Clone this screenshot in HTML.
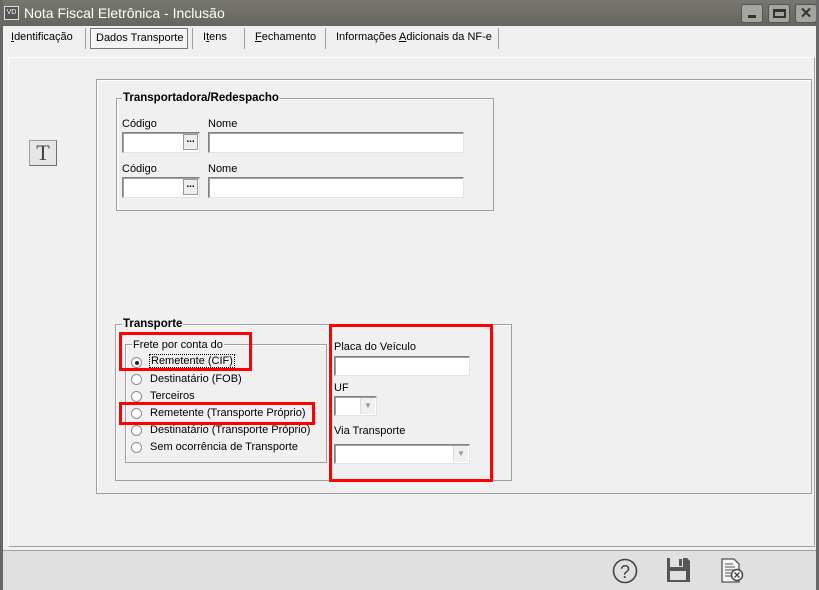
<!DOCTYPE html>
<html><head><meta charset="utf-8"><style>
*{margin:0;padding:0;box-sizing:border-box}
body{width:819px;height:590px;overflow:hidden;background:#f0f0f0;font-family:"Liberation Sans",sans-serif;font-size:11px;color:#000;position:relative}
.a{position:absolute}
.title{left:0;top:0;width:819px;height:26px;background:linear-gradient(#77776f,#66665f);color:#fff;font-size:14px}
.wb{top:4px;width:22px;height:19px;background:#a4a4a0;border:1px solid #555;border-radius:3px}
.lb{position:absolute;left:0;top:0;width:3px;height:590px;background:#676767}
.rb{position:absolute;right:0;top:0;width:3px;height:590px;background:#676767}
.tab{top:31px;font-size:11px}
.sep{top:28px;width:1px;height:21px;background:#a0a0a0}
.grp{border:1px solid #a0a0a0;box-shadow:1px 1px 0 #fff inset}
.gl{background:#f0f0f0;font-weight:bold;padding:0 1px}
.inp{background:#fff;border:1px solid #828282;border-right-color:#e3e3e3;border-bottom-color:#e3e3e3;box-shadow:1px 1px 0 #a0a0a0 inset}
.red{border:3px solid #f00}
.rad{width:11px;height:11px;border-radius:50%;border:1px solid #8d8d8d;background:#fff;left:131px}
.rt{left:150px}
</style></head><body>
<div class="a title"><div class="a" style="left:4px;top:6px;width:15px;height:14px;border:1px solid #ddd;font-size:7px;line-height:12px;text-align:center;background:#555">VD</div><div class="a" style="left:24px;top:5px;font-size:14px">Nota Fiscal Eletrônica - Inclusão</div>
<div class="a wb" style="left:741px"><div class="a" style="left:6px;top:10px;width:8px;height:3px;background:#333"></div></div>
<div class="a wb" style="left:768px"><div class="a" style="left:4px;top:4px;width:13px;height:9px;border:2px solid #333;border-top-width:3px"></div></div>
<div class="a wb" style="left:795px;color:#333;font-weight:bold;font-size:15px;line-height:17px;text-align:center">✕</div>
</div>
<div class="lb"></div><div class="rb"></div>
<div class="a tab" style="left:11px"><u>I</u>dentificação</div>
<div class="a sep" style="left:85px"></div>
<div class="a" style="left:90px;top:28px;width:98px;height:21px;border:1px solid #777;background:#f4f4f4;box-shadow:1px 1px 0 #fff inset"></div>
<div class="a tab" style="left:96px;top:32px">Dados Transporte</div>
<div class="a sep" style="left:192px"></div>
<div class="a tab" style="left:203px">I<u>t</u>ens</div>
<div class="a sep" style="left:244px"></div>
<div class="a tab" style="left:255px"><u>F</u>echamento</div>
<div class="a sep" style="left:325px"></div>
<div class="a tab" style="left:336px">Informações <u>A</u>dicionais da NF-e</div>
<div class="a sep" style="left:498px"></div>
<div class="a" style="left:8px;top:57px;width:807px;height:490px;border-left:1px solid #fff;border-top:1px solid #fff;border-right:1px solid #a0a0a0;border-bottom:1px solid #a0a0a0"></div>
<div class="a grp" style="left:96px;top:79px;width:716px;height:415px"></div>
<div class="a" style="left:3px;top:550px;width:813px;height:1px;background:#a0a0a0"></div>
<div class="a" style="left:3px;top:551px;width:813px;height:39px;background:#e0e0e0"></div>
<div class="a" style="left:29px;top:140px;width:28px;height:26px;background:#e6e6e6;border:1px solid #a0a0a0;border-right-color:#707070;border-bottom-color:#707070;font-family:'Liberation Serif',serif;font-size:22px;line-height:24px;text-align:center;color:#444">T</div>
<div class="a grp" style="left:116px;top:98px;width:378px;height:113px"></div>
<div class="a gl" style="left:122px;top:92px;font-size:11.5px">Transportadora/Redespacho</div>
<div class="a" style="left:122px;top:118px">Código</div><div class="a" style="left:208px;top:118px">Nome</div>
<div class="a inp" style="left:122px;top:132px;width:78px;height:21px"></div>
<div class="a" style="left:183px;top:134px;width:15px;height:16px;background:#eee;border:1px solid #999;font-size:10px;line-height:10px;text-align:center;font-weight:bold">...</div>
<div class="a inp" style="left:208px;top:132px;width:256px;height:21px"></div>
<div class="a" style="left:122px;top:163px">Código</div><div class="a" style="left:208px;top:163px">Nome</div>
<div class="a inp" style="left:122px;top:177px;width:78px;height:21px"></div>
<div class="a" style="left:183px;top:179px;width:15px;height:16px;background:#eee;border:1px solid #999;font-size:10px;line-height:10px;text-align:center;font-weight:bold">...</div>
<div class="a inp" style="left:208px;top:177px;width:256px;height:21px"></div>
<div class="a grp" style="left:115px;top:324px;width:397px;height:157px"></div>
<div class="a gl" style="left:122px;top:318px;font-size:11.5px">Transporte</div>
<div class="a grp" style="left:125px;top:344px;width:202px;height:119px"></div>
<div class="a" style="left:132px;top:339px;background:#f0f0f0;padding:0 1px">Frete por conta do</div>
<div class="a rad" style="top:357px"><div class="a" style="left:3px;top:3px;width:4px;height:4px;border-radius:50%;background:#222"></div></div>
<div class="a rt" style="top:355px;outline:1px dotted #000;padding:0 1px">Remetente (CIF)</div>
<div class="a rad" style="top:374px"></div><div class="a rt" style="top:373px">Destinatário (FOB)</div>
<div class="a rad" style="top:391px"></div><div class="a rt" style="top:390px">Terceiros</div>
<div class="a rad" style="top:408px"></div><div class="a rt" style="top:407px">Remetente (Transporte Próprio)</div>
<div class="a rad" style="top:425px"></div><div class="a rt" style="top:424px">Destinatário (Transporte Próprio)</div>
<div class="a rad" style="top:442px"></div><div class="a rt" style="top:441px">Sem ocorrência de Transporte</div>
<div class="a" style="left:334px;top:341px">Placa do Veículo</div>
<div class="a inp" style="left:334px;top:356px;width:136px;height:20px"></div>
<div class="a" style="left:334px;top:382px">UF</div>
<div class="a inp" style="left:334px;top:396px;width:43px;height:20px"></div>
<div class="a" style="left:360px;top:398px;width:15px;height:16px;background:#f0f0f0;border-left:1px solid #ddd;color:#999;font-size:8px;text-align:center;line-height:16px">▼</div>
<div class="a" style="left:334px;top:425px">Via Transporte</div>
<div class="a inp" style="left:334px;top:444px;width:136px;height:20px"></div>
<div class="a" style="left:453px;top:446px;width:15px;height:16px;background:#f0f0f0;border-left:1px solid #ddd;color:#999;font-size:8px;text-align:center;line-height:16px">▼</div>
<div class="a red" style="left:119px;top:332px;width:133px;height:39px"></div>
<div class="a red" style="left:119px;top:402px;width:196px;height:23px"></div>
<div class="a red" style="left:329px;top:324px;width:164px;height:158px"></div>
<svg class="a" style="left:600px;top:552px" width="219" height="38">
<circle cx="25" cy="19" r="11.5" fill="none" stroke="#444" stroke-width="1.6"/>
<text x="25" y="26" font-family="Liberation Sans" font-size="18" fill="#444" text-anchor="middle">?</text>
<path d="M67 6h20l3 3v21h-23z" fill="#555"/><rect x="70" y="6" width="13" height="9" fill="#e0e0e0"/><rect x="79" y="7" width="3" height="7" fill="#555"/><rect x="70" y="19" width="16" height="9" fill="#e0e0e0"/>
<path d="M122 7h12l5 5v18h-17z" fill="#f4f4f4" stroke="#555" stroke-width="1.3"/>
<path d="M125 12h8M125 15h10M125 18h10M125 21h6M125 24h6" stroke="#555"/>
<circle cx="137" cy="23" r="5.5" fill="#fff" stroke="#444" stroke-width="1.5"/><path d="M134.5 20.5l5 5M139.5 20.5l-5 5" stroke="#444" stroke-width="1.4"/>
</svg>
</body></html>
